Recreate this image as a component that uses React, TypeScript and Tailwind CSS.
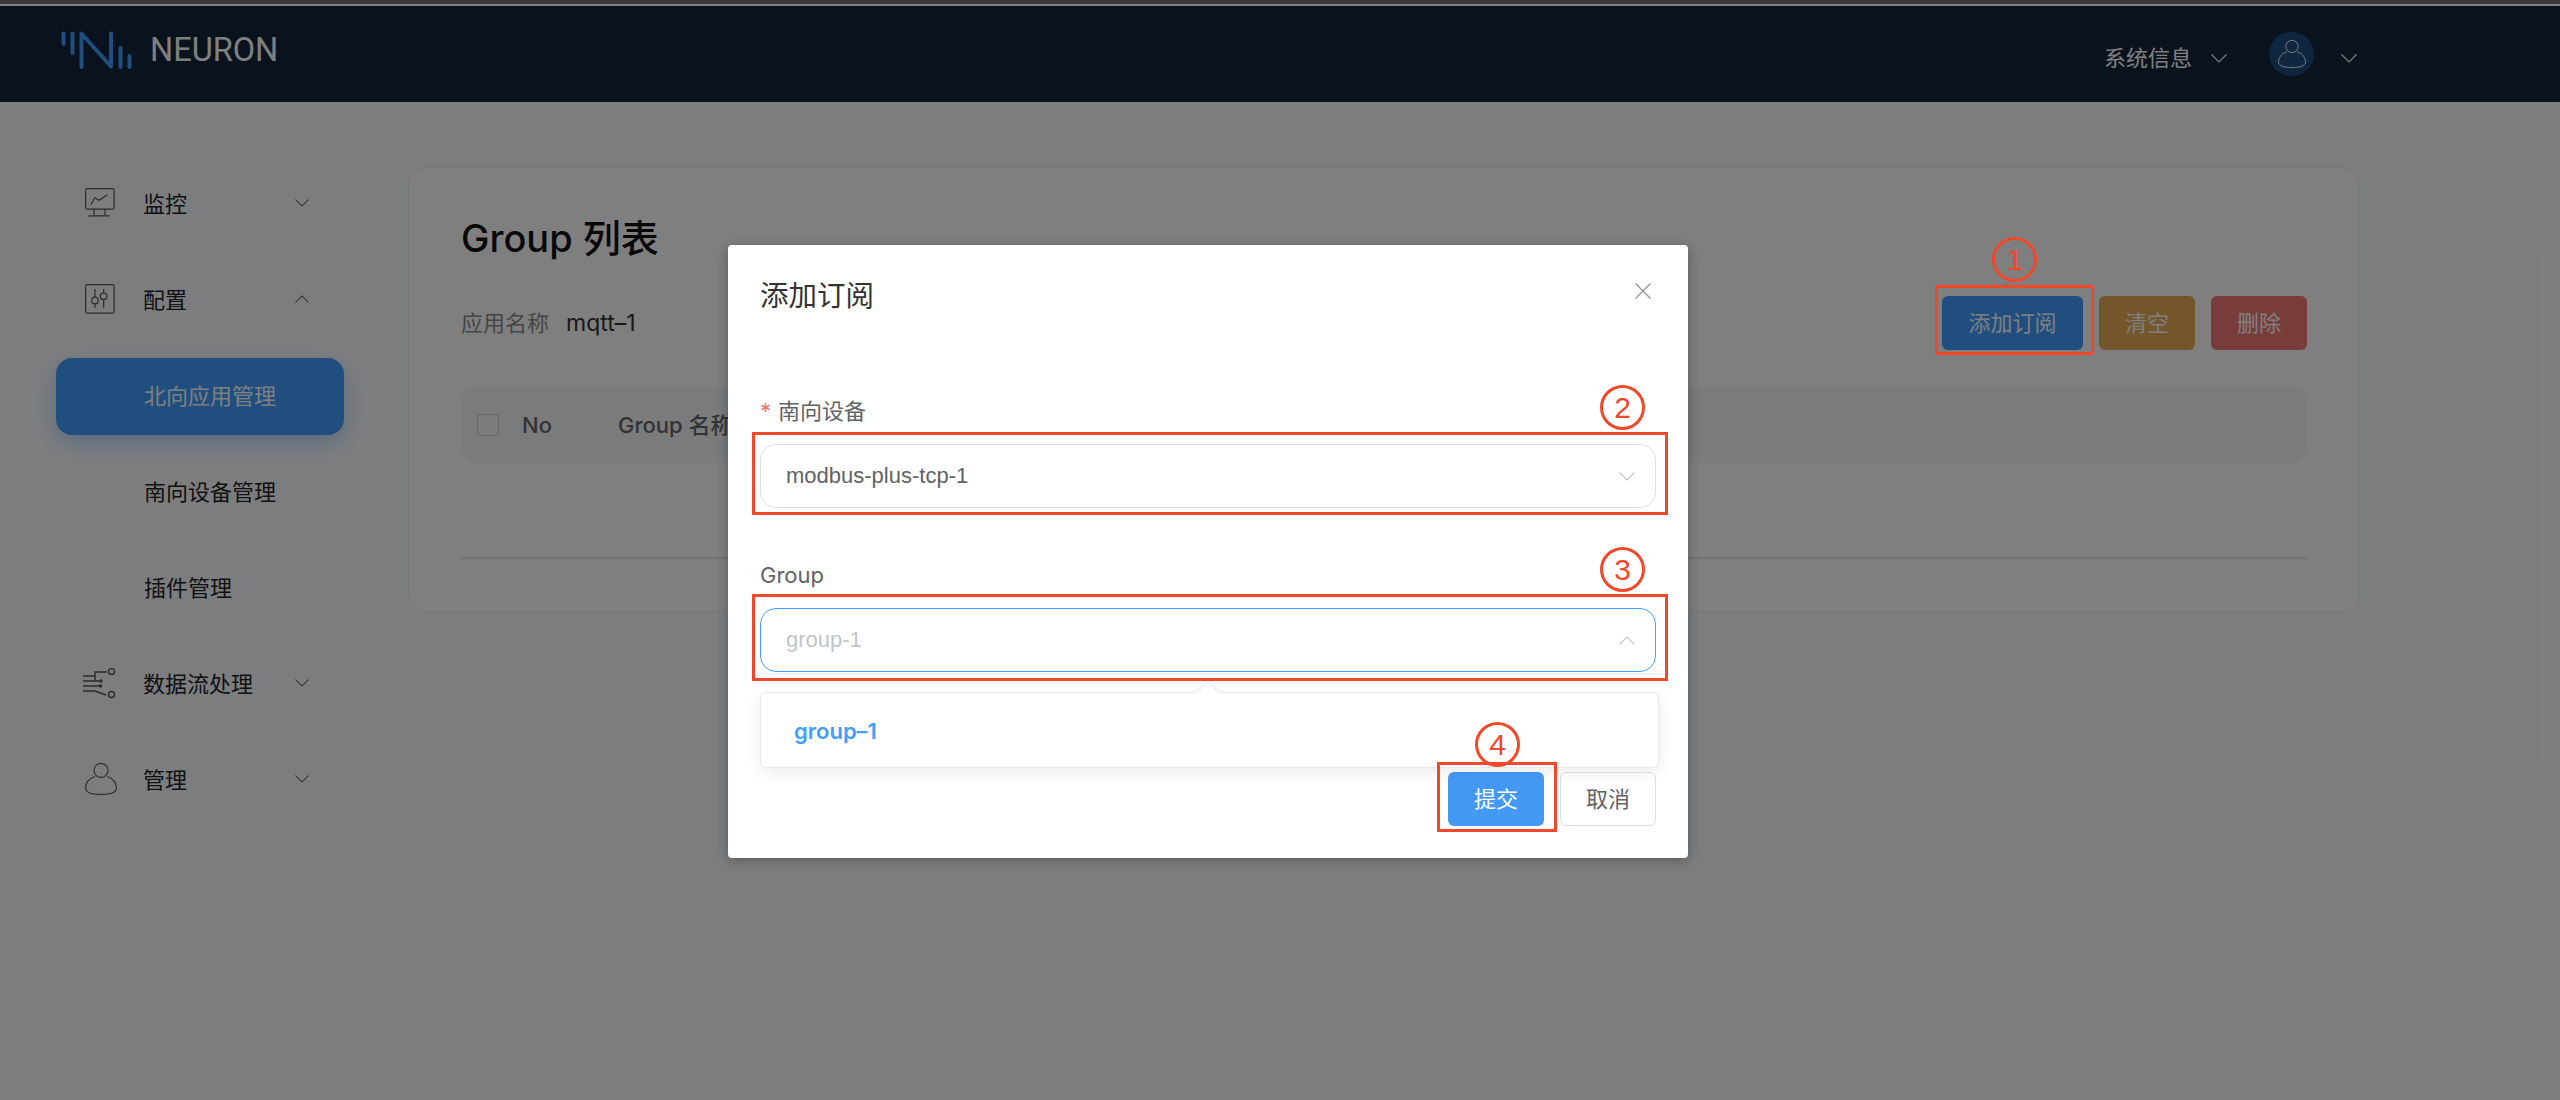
import React from "react";

const Chevron = ({ up = false, className = "" }: { up?: boolean; className?: string }) => (
  <svg viewBox="0 0 16 9" fill="none" stroke="currentColor" strokeWidth="1.2" className={className}>
    <polyline points={up ? "0.5,8.5 8,1 15.5,8.5" : "0.5,0.5 8,8 15.5,0.5"} />
  </svg>
);

const MonitorIcon = () => (
  <svg viewBox="0 0 30 30" fill="none" stroke="#555" strokeWidth="1.2" className="w-[30px] h-[30px]">
    <rect x="0.6" y="0.6" width="28.5" height="20.5" rx="1.5" />
    <polyline points="5.7,16.7 10,9.7 14.3,12.3 22.3,6.7" />
    <path d="M9 21v6M20 21v6M3.5 27.8h21" />
  </svg>
);
const SlidersIcon = () => (
  <svg viewBox="0 0 30 30" fill="none" stroke="#555" strokeWidth="1.2" className="w-[30px] h-[30px]">
    <rect x="0.6" y="0.6" width="28.5" height="28.5" rx="1.5" />
    <path d="M10 5v8.2M10 19.8V24M18.7 5v4M18.7 15.6V24" />
    <circle cx="10" cy="16.5" r="3.3" />
    <circle cx="18.7" cy="12.3" r="3.3" />
  </svg>
);
const CircuitIcon = () => (
  <svg viewBox="0 0 33 31" fill="none" stroke="#555" strokeWidth="1.4" className="w-[33px] h-[31px] -ml-[2px]">
    <path d="M0 8h12M0 13h17M0 18h17M0 23h12l11 4" />
    <path d="M12 13V4h12" />
    <circle cx="28.5" cy="3.5" r="3" />
    <circle cx="28.5" cy="26.5" r="3" />
    <circle cx="17.5" cy="18" r="1" fill="#555" />
    <circle cx="18" cy="13" r="1" fill="#555" />
  </svg>
);
const UserIcon = ({ stroke, className }: { stroke: string; className: string }) => (
  <svg viewBox="0 0 32 32" fill="none" stroke={stroke} strokeWidth="1.1" className={className}>
    <circle cx="16" cy="7.4" r="7" />
    <path d="M10 13.5C4 15.5.6 20 .6 25c0 5 7.4 6.400 15.400 6.400S31.400 30 31.400 25c0-5-3.400-9.500-9.400-11.500" />
  </svg>
);
const Logo = () => (
  <svg viewBox="0 0 72 40" fill="none" stroke="#3f9fff" strokeWidth="4" strokeLinecap="round" strokeLinejoin="round" className="w-[72px] h-[40px] mb-[8px]">
    <path d="M3.500 3.500V14M12.500 3.500V23M21.500 37V3.500L51 36.500V3.500M60.500 18V37M69.500 26V37" />
  </svg>
);

const NavItem = ({ icon, label, up }: { icon: React.ReactNode; label: string; up?: boolean }) => (
  <div className="h-[96px] flex items-center pl-[85px] pr-[99px] text-[22px] text-[#222]">
    <div className="w-[58px] flex shrink-0">{icon}</div>
    <span className="flex-1 pt-[2px]">{label}</span>
    <Chevron up={up} className="w-[14px] h-[8px] text-[#555]" />
  </div>
);
const SubItem = ({ label }: { label: string }) => (
  <div className="h-[96px] flex items-center pl-[144px] pt-[2px] text-[22px] text-[#222]">{label}</div>
);

const Action = ({ label, className }: { label: string; className: string }) => (
  <div className={`h-[54px] flex items-center justify-center rounded-[6px] text-[22px] text-white ${className}`}>{label}</div>
);

const Mark = ({ className }: { className: string }) => (
  <div className={`absolute border-[3px] border-[#f0482a] ${className}`} />
);
const Num = ({ n, className }: { n: string; className: string }) => (
  <div className={`absolute w-[45px] h-[45px] rounded-full border-[3px] border-[#f0482a] flex items-center justify-center text-[30px] text-[#f0482a] [font-family:'Liberation_Sans',sans-serif] ${className}`}>{n}</div>
);

export default function App() {
  return (
    <div className="relative w-full h-[1100px] overflow-hidden bg-[#f9fbff] [font-family:Inter,'Noto_Sans_CJK_SC',sans-serif]">
      <div className="h-[4px] bg-[#707074]" />
      <div className="h-[2px] bg-white" />
      <header className="h-[96px] bg-[#14243c] flex items-center pl-[60px] pr-[203px] text-white">
        <Logo />
        <span className="ml-[18px] mb-[8px] text-[32.5px] [font-family:Roboto,sans-serif]">NEURON</span>
        <div className="flex-1" />
        <span className="text-[22px] mt-[8px]">系统信息</span>
        <Chevron className="w-[16px] h-[9px] ml-[19px] mt-[8px]" />
        <div className="w-[45px] h-[44px] ml-[42px] rounded-full bg-[#1e4c80] flex items-center justify-center">
          <UserIcon stroke="#fff" className="w-[28px] h-[28px]" />
        </div>
        <Chevron className="w-[16px] h-[9px] ml-[27px] mt-[8px]" />
      </header>

      <div className="flex">
        <aside className="w-[408px] shrink-0 pt-[53px]">
          <NavItem icon={<MonitorIcon />} label="监控" />
          <NavItem icon={<SlidersIcon />} label="配置" up />
          <div className="h-[96px] flex items-center">
            <div className="ml-[56px] w-[288px] h-[77px] mt-[2px] rounded-[16px] bg-[#409eff] shadow-[0_8px_20px_rgba(64,158,255,0.35)] flex items-center pl-[88px] text-[22px] text-white">
              北向应用管理
            </div>
          </div>
          <SubItem label="南向设备管理" />
          <SubItem label="插件管理" />
          <NavItem icon={<CircuitIcon />} label="数据流处理" />
          <NavItem icon={<UserIcon stroke="#555" className="w-[32px] h-[32px]" />} label="管理" />
        </aside>

        <main className="w-[1951px] h-[445px] mt-[65px] bg-white rounded-[16px] border border-[#eeeef3] pl-[52px] pr-[51px] pt-[45px]">
          <h1 className="text-[38px] leading-[50px] font-medium text-[#111]">Group 列表</h1>
          <div className="mt-[33px] h-[54px] flex items-center text-[22px]">
            <span className="text-[#8a8a8a]">应用名称</span>
            <span className="ml-[17px] text-[#333] text-[23px]">mqtt–1</span>
            <div className="flex-1" />
            <Action label="添加订阅" className="w-[141px] bg-[#409eff] ml-[16px]" />
            <Action label="清空" className="w-[96px] bg-[#e6ac54] ml-[16px]" />
            <Action label="删除" className="w-[96px] bg-[#f07a76] ml-[16px]" />
          </div>
          <div className="mt-[37px] h-[76px] rounded-[16px] bg-[#f5f6f8] flex items-center pl-[16px] text-[22px] font-medium text-[#666]">
            <div className="w-[22px] h-[22px] rounded-[3px] border border-[#c8cbd2] bg-[#f7f7f9]" />
            <span className="ml-[23px]">No</span>
            <span className="ml-[66px]">Group 名称</span>
          </div>
          <div className="h-[96px] border-b-2 border-[#e4e4ee]" />
        </main>
      </div>

      <div className="absolute inset-0 bg-black/50" />

      <div className="absolute left-[728px] top-[245px] w-[960px] h-[613px] bg-white rounded-[4px] shadow-[0_2px_12px_rgba(0,0,0,0.3)] px-[32px] pt-[31px] pb-[32px]">
        <div className="flex justify-between items-start pr-[5px]">
          <h2 className="text-[28.5px] leading-[40px] text-[#333]">添加订阅</h2>
          <svg viewBox="0 0 16 16" stroke="#8f9299" strokeWidth="1.300" className="w-[16px] h-[16px] mt-[7px]">
            <path d="M.5.5l15 15M15.500.5l-15 15" />
          </svg>
        </div>

        <div className="mt-[79px] text-[22px] leading-[32px] text-[#606266]">
          <span className="text-[#f56c6c] mr-[7px]">*</span>南向设备
        </div>
        <div className="mt-[17px] h-[64px] rounded-[16px] border border-[#dcdfe6] flex items-center pl-[25px] pr-[20px] text-[22px] text-[#606266]">
          <span className="flex-1 -mt-[2px] [font-family:'Liberation_Sans',sans-serif]">modbus-plus-tcp-1</span>
          <Chevron className="w-[16px] h-[9px] text-[#c0c4cc]" />
        </div>

        <div className="mt-[52px] -translate-y-[1px] text-[22px] leading-[32px] text-[#606266]">Group</div>
        <div className="mt-[16px] h-[64px] rounded-[16px] border border-[#409eff] flex items-center pl-[25px] pr-[20px] text-[22px] text-[#c0c4cc]">
          <span className="flex-1 -mt-[2px] [font-family:'Liberation_Sans',sans-serif]">group-1</span>
          <Chevron up className="w-[16px] h-[9px] text-[#c0c4cc]" />
        </div>

        <div className="mt-[100px] flex justify-end gap-[16px] text-[22px]">
          <div className="w-[96px] h-[54px] rounded-[6px] bg-[#4499f5] text-white flex items-center justify-center">提交</div>
          <div className="w-[96px] h-[54px] rounded-[6px] border border-[#dcdfe6] text-[#606266] flex items-center justify-center">取消</div>
        </div>

        <div className="absolute left-[32px] top-[447px] w-[899px] h-[76px] bg-white rounded-[6px] border border-[#e8e9f0] shadow-[0_4px_16px_rgba(0,0,0,0.08)] flex items-center pl-[33px] pt-[2px] text-[22px] font-semibold text-[#409eff]">
          group–1
          <div className="absolute left-[439px] -top-[9px] w-[16px] h-[16px] rotate-45 bg-white border-l border-t border-[#e8e9f0]" />
        </div>
      </div>

      <Mark className="left-[1935px] top-[285px] w-[159px] h-[70px]" />
      <Mark className="left-[752px] top-[432px] w-[916px] h-[83px]" />
      <Mark className="left-[752px] top-[594px] w-[916px] h-[87px]" />
      <Mark className="left-[1437px] top-[762px] w-[120px] h-[70px]" />
      <Num n="1" className="left-[1992px] top-[237px]" />
      <Num n="2" className="left-[1600px] top-[385px]" />
      <Num n="3" className="left-[1600px] top-[547px]" />
      <Num n="4" className="left-[1475px] top-[722px]" />
    </div>
  );
}
